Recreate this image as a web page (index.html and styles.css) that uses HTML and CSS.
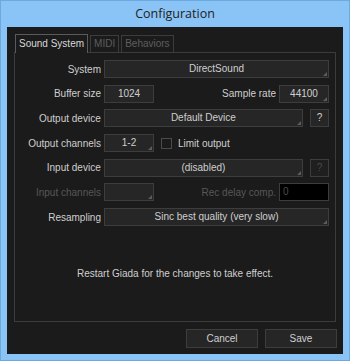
FILE: index.html
```html
<!DOCTYPE html>
<html lang="en">
<head>
    <meta charset="UTF-8">
    <meta name="viewport" content="width=device-width, initial-scale=1.0">
    <title>Configuration</title>
    <link rel="stylesheet" href="styles.css">
</head>
<body>
    <div class="window">
        <div class="titlebar">Configuration</div>
        <div class="client">
            <div class="tabs">
                <div class="tab active">Sound System</div>
                <div class="tab">MIDI</div>
                <div class="tab">Behaviors</div>
            </div>
            <div class="panel">
                <div class="row">
                    <span class="label">System</span>
                    <div class="choice wide">DirectSound</div>
                </div>
                <div class="row">
                    <span class="label">Buffer size</span>
                    <div class="input">1024</div>
                    <span class="label2">Sample rate</span>
                    <div class="choice small">44100</div>
                </div>
                <div class="row">
                    <span class="label">Output device</span>
                    <div class="choice mid">Default Device</div>
                    <div class="btn-q">?</div>
                </div>
                <div class="row">
                    <span class="label">Output channels</span>
                    <div class="choice small">1-2</div>
                    <span class="check"></span>
                    <span class="check-label">Limit output</span>
                </div>
                <div class="row">
                    <span class="label">Input device</span>
                    <div class="choice mid">(disabled)</div>
                    <div class="btn-q off">?</div>
                </div>
                <div class="row">
                    <span class="label off">Input channels</span>
                    <div class="choice small"></div>
                    <span class="label2 off">Rec delay comp.</span>
                    <div class="field-dark">0</div>
                </div>
                <div class="row">
                    <span class="label">Resampling</span>
                    <div class="choice wide">Sinc best quality (very slow)</div>
                </div>
                <p class="notice">Restart Giada for the changes to take effect.</p>
            </div>
            <div class="buttons">
                <button class="btn">Cancel</button>
                <button class="btn">Save</button>
            </div>
        </div>
    </div>
</body>
</html>
```

FILE: styles.css
```css
* { box-sizing: border-box; }

body {
    margin: 0;
    background: #8ac4f6;
    font-family: "Liberation Sans", Arial, sans-serif;
    font-size: 10px;
    color: #cfcfcf;
}

.window {
    width: 350px;
    height: 361px;
    border: 1px solid #6ea9dd;
    background: #8ac4f6;
}

.titlebar {
    height: 26px;
    line-height: 26px;
    text-align: center;
    font-family: "Open Sans", "Noto Sans", sans-serif;
    font-size: 12.5px;
    color: #222;
}

.client {
    margin: 0 6px;
    height: 327px;
    background: #1b1b1b;
    padding: 6px 7px 0 7px;
}

/* pestañas */
.tabs {
    display: flex;
    align-items: flex-end;
    gap: 2px;
    height: 19px;
    padding-left: 1px;
}
.tab {
    height: 17px;
    line-height: 15px;
    padding: 0 3px;
    border: 1px solid #3c3c3c;
    border-bottom: none;
    color: #5e5e5e;
    background: #1b1b1b;
}
.tab.active {
    height: 19px;
    line-height: 18px;
    border-color: #5a5a5a;
    color: #d8d8d8;
    position: relative;
    top: 1px;
}

.panel {
    height: 270px;
    border: 1px solid #3c3c3c;
    padding: 7px 6px 0 0;
}

.row {
    display: flex;
    align-items: center;
    height: 18px;
    margin-bottom: 6.7px;
}
.label {
    width: 89px;
    padding-right: 3px;
    text-align: right;
    white-space: nowrap;
}
.label2 {
    flex: 1;
    text-align: right;
    padding-right: 3px;
    white-space: nowrap;
}
.off { color: #575757; }

.choice, .input, .field-dark, .btn-q {
    height: 18px;
    line-height: 16px;
    border: 1px solid #3d3d3d;
    background: #262626;
    text-align: center;
    white-space: nowrap;
}
.choice { position: relative; }
.choice::after {
    content: "";
    position: absolute;
    right: 1px;
    bottom: 1px;
    border-left: 4px solid transparent;
    border-bottom: 4px solid #5c5c5c;
}
.wide { width: 225px; }
.mid { width: 200px; }
.small, .input { width: 50px; }

.btn-q {
    width: 19px;
    margin-left: 7px;
}
.btn-q.off { color: #4a4a4a; background: #1f1f1f; }

.check {
    width: 11px;
    height: 11px;
    border: 1px solid #4a4a4a;
    background: #1b1b1b;
    margin-left: 7px;
}
.check-label { margin-left: 6px; }

.field-dark {
    width: 50px;
    background: #000;
    color: #4a4a4a;
    text-align: left;
    padding-left: 3px;
}

.notice {
    margin: 42px 0 0 6px;
    text-align: center;
}

.buttons {
    display: flex;
    justify-content: flex-end;
    gap: 7px;
    margin-top: 7px;
    margin-right: -1px;
}
.btn {
    width: 72px;
    height: 19px;
    border: 1px solid #3d3d3d;
    background: #262626;
    color: #cfcfcf;
    font-family: "Liberation Sans", Arial, sans-serif;
    font-size: 10px;
    padding: 0;
}
```
